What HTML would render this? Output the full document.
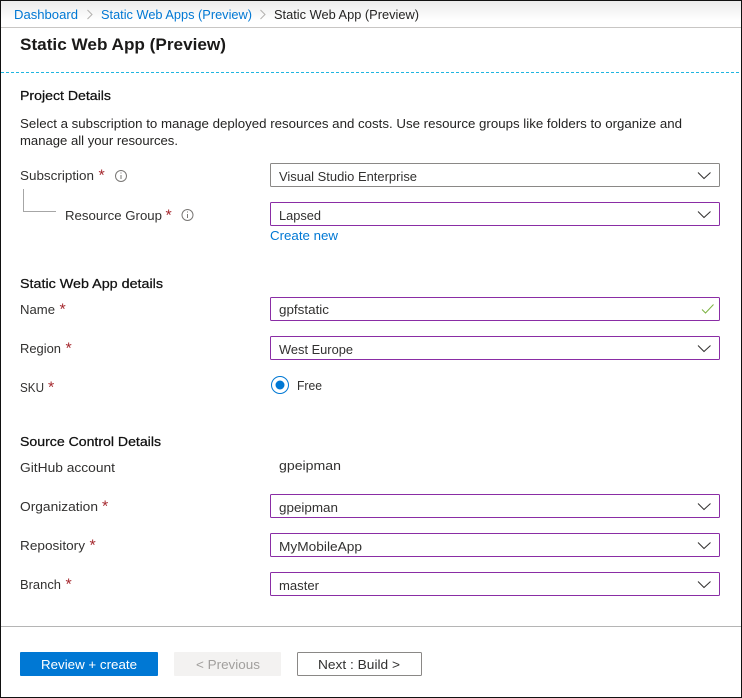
<!DOCTYPE html>
<html><head><meta charset="utf-8"><title>Static Web App (Preview)</title>
<style>
html,body{margin:0;padding:0;background:#fff}
svg{display:block}
text{font-family:"Liberation Sans",sans-serif;font-size:13.300px;fill:#323130;white-space:pre}
.l{fill:#0078d4}
.d{fill:#252423}
.h{fill:#111;stroke:#111;stroke-width:.25px}
.s{fill:#a4262c;font-size:16px}
.b{fill:#fff;stroke:#8a2da5;stroke-width:1}
.g{fill:#fff;stroke:#8a8886;stroke-width:1}
.c{fill:none;stroke:#323130;stroke-width:1}
.i{fill:none;stroke:#7a7876;stroke-width:1}
</style></head><body>
<svg width="742" height="698" viewBox="0 0 742 698" xmlns="http://www.w3.org/2000/svg">
<defs><linearGradient id="hg" x1="0" y1="0" x2="0" y2="1"><stop offset="0" stop-color="#ebebeb"/><stop offset=".75" stop-color="#fff"/></linearGradient></defs>
<rect width="742" height="698" fill="#fff"/>
<rect x="1" y="1" width="740" height="26" fill="url(#hg)"/>
<rect x="0" y="0" width="742" height="1" fill="#111"/>
<rect x="0" y="0" width="1" height="698" fill="#111"/>
<rect x="741" y="0" width="1" height="698" fill="#111"/>
<rect x="0" y="697" width="742" height="1" fill="#111"/>
<rect x="1" y="27" width="740" height="1" fill="#c8c6c4"/>
<line x1="1" y1="72.500" x2="741" y2="72.500" stroke="#1fb6e0" stroke-width="1" stroke-dasharray="3 2"/>
<rect x="1" y="626" width="740" height="1" fill="#b5b5b5"/>

<text class="l" x="14" y="19" textLength="64" lengthAdjust="spacingAndGlyphs">Dashboard</text>
<path d="M87.500 10l4.500 4.500-4.500 4.500" fill="none" stroke="#b3b1af"/>
<text class="l" x="101" y="19" textLength="151" lengthAdjust="spacingAndGlyphs">Static Web Apps (Preview)</text>
<path d="M260.500 10l4.500 4.500-4.500 4.500" fill="none" stroke="#b3b1af"/>
<text class="d" x="274" y="19" textLength="145" lengthAdjust="spacingAndGlyphs">Static Web App (Preview)</text>

<text x="20" y="50" textLength="206" lengthAdjust="spacingAndGlyphs" style="font-size:17px;font-weight:700;fill:#1b1a19">Static Web App (Preview)</text>

<text class="h" x="20" y="100" textLength="91" lengthAdjust="spacingAndGlyphs">Project Details</text>
<text class="d" x="20" y="128" textLength="662" lengthAdjust="spacingAndGlyphs">Select a subscription to manage deployed resources and costs. Use resource groups like folders to organize and</text>
<text class="d" x="20" y="145" textLength="158" lengthAdjust="spacingAndGlyphs">manage all your resources.</text>

<text x="20" y="180" textLength="74" lengthAdjust="spacingAndGlyphs">Subscription</text>
<text class="s" x="98.500" y="180.500">*</text>
<circle class="i" cx="121" cy="176" r="5.500"/>
<rect x="120.500" y="172.500" width="1" height="1" fill="#7a7876"/><rect x="120.500" y="175" width="1" height="4" fill="#7a7876"/>

<path d="M23.500 189v22.500H56" fill="none" stroke="#a6a6a6"/>
<text x="65" y="220" textLength="97" lengthAdjust="spacingAndGlyphs">Resource Group</text>
<text class="s" x="165.500" y="220.500">*</text>
<circle class="i" cx="187.500" cy="215" r="5.500"/>
<rect x="187" y="211.500" width="1" height="1" fill="#7a7876"/><rect x="187" y="214" width="1" height="4" fill="#7a7876"/>

<rect class="g" x="270.500" y="163.500" width="449" height="23" rx="1"/>
<text x="279" y="181" textLength="138" lengthAdjust="spacingAndGlyphs">Visual Studio Enterprise</text>
<path class="c" d="M698 172.500l6 6 6.500-6"/>

<rect class="b" x="270.500" y="202.500" width="449" height="23" rx="1"/>
<text x="279" y="220" textLength="42" lengthAdjust="spacingAndGlyphs">Lapsed</text>
<path class="c" d="M698 211.500l6 6 6.500-6"/>
<text class="l" x="270" y="240" textLength="68" lengthAdjust="spacingAndGlyphs">Create new</text>

<text class="h" x="20" y="288" textLength="143" lengthAdjust="spacingAndGlyphs">Static Web App details</text>

<text x="20" y="314" textLength="35" lengthAdjust="spacingAndGlyphs">Name</text>
<text class="s" x="59.500" y="314.500">*</text>
<rect class="b" x="270.500" y="297.500" width="449" height="23" rx="1"/>
<text x="279" y="314" textLength="50" lengthAdjust="spacingAndGlyphs">gpfstatic</text>
<path d="M702 309.500l3.500 3.500 8-8.500" fill="none" stroke="#7cb342" stroke-width="1"/>

<text x="20" y="353" textLength="41" lengthAdjust="spacingAndGlyphs">Region</text>
<text class="s" x="65.500" y="353.500">*</text>
<rect class="b" x="270.500" y="336.500" width="449" height="23" rx="1"/>
<text x="279" y="354" textLength="74" lengthAdjust="spacingAndGlyphs">West Europe</text>
<path class="c" d="M698 345.500l6 6 6.500-6"/>

<text x="20" y="392" textLength="24" lengthAdjust="spacingAndGlyphs">SKU</text>
<text class="s" x="48" y="392.500">*</text>
<circle cx="280" cy="385" r="8.500" fill="#fff" stroke="#0078d4"/>
<circle cx="280" cy="385" r="4.500" fill="#0078d4"/>
<text x="297" y="390" textLength="25" lengthAdjust="spacingAndGlyphs">Free</text>

<text class="h" x="20" y="446" textLength="141" lengthAdjust="spacingAndGlyphs">Source Control Details</text>
<text x="20" y="472" textLength="95" lengthAdjust="spacingAndGlyphs">GitHub account</text>
<text x="279" y="470" textLength="62" lengthAdjust="spacingAndGlyphs">gpeipman</text>

<text x="20" y="511" textLength="78" lengthAdjust="spacingAndGlyphs">Organization</text>
<text class="s" x="102" y="511.500">*</text>
<rect class="b" x="270.500" y="494.500" width="449" height="23" rx="1"/>
<text x="279" y="512" textLength="59" lengthAdjust="spacingAndGlyphs">gpeipman</text>
<path class="c" d="M698 503.500l6 6 6.500-6"/>

<text x="20" y="550" textLength="65" lengthAdjust="spacingAndGlyphs">Repository</text>
<text class="s" x="89.500" y="550.500">*</text>
<rect class="b" x="270.500" y="533.500" width="449" height="23" rx="1"/>
<text x="279" y="551" textLength="83" lengthAdjust="spacingAndGlyphs">MyMobileApp</text>
<path class="c" d="M698 542.500l6 6 6.500-6"/>

<text x="20" y="589" textLength="41" lengthAdjust="spacingAndGlyphs">Branch</text>
<text class="s" x="65.500" y="589.500">*</text>
<rect class="b" x="270.500" y="572.500" width="449" height="23" rx="1"/>
<text x="279" y="590" textLength="40" lengthAdjust="spacingAndGlyphs">master</text>
<path class="c" d="M698 581.500l6 6 6.500-6"/>

<rect x="20" y="652" width="138" height="24" rx="1" fill="#0078d4"/>
<text x="41" y="669" textLength="96" lengthAdjust="spacingAndGlyphs" style="fill:#fff">Review + create</text>
<rect x="174" y="652" width="107" height="24" rx="1" fill="#f3f2f1"/>
<text x="196" y="669" textLength="64" lengthAdjust="spacingAndGlyphs" style="fill:#a19f9d">&lt; Previous</text>
<rect x="297.500" y="652.500" width="124" height="23" rx="1" fill="#fff" stroke="#8a8886"/>
<text x="318" y="669" textLength="82" lengthAdjust="spacingAndGlyphs" style="fill:#323130">Next : Build &gt;</text>
</svg>
</body></html>
